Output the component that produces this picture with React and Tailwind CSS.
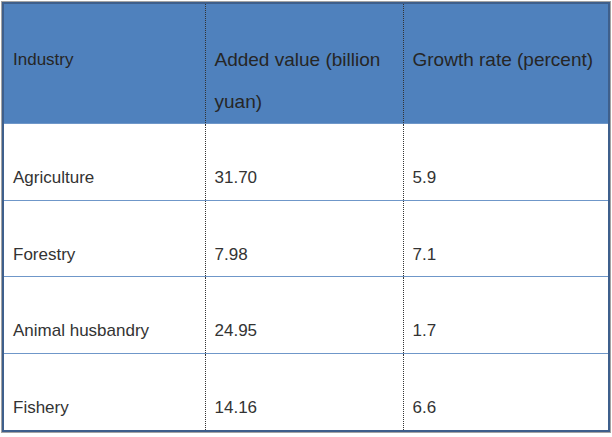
export default function App() {
  const rows = [
    ["Agriculture", "31.70", "5.9"],
    ["Forestry", "7.98", "7.1"],
    ["Animal husbandry", "24.95", "1.7"],
    ["Fishery", "14.16", "6.6"],
  ];
  const vline = "border-l border-l-[#333] [border-left-style:dotted]";
  return (
    <div className="w-[612px] h-[437px] bg-white" style={{ fontFamily: '"Liberation Sans", Arial, sans-serif' }}>
      <div className="ml-px mt-px w-[610px] border border-[#a3a3a3]">
        <table className="w-full border-collapse border-2 border-[#3e5f8c] table-fixed text-[17px] leading-[42px] text-[#333333]">
          <colgroup>
            <col className="w-[202px]" />
            <col className="w-[198px]" />
            <col />
          </colgroup>
          <thead>
            <tr className="h-[120px] bg-[#4f81bd] text-[#262626]">
              <th className="font-normal text-left align-top pl-[9px] pt-[35px] border-b border-b-[#6f97c9]">Industry</th>
              <th className={"font-normal text-[19px] text-left align-top pl-[9px] pr-2 pt-[35px] border-b border-b-[#6f97c9] " + vline}>Added value (billion yuan)</th>
              <th className={"font-normal text-[19px] text-left align-top pl-[9px] pt-[35px] border-b border-b-[#6f97c9] " + vline}>Growth rate (percent)</th>
            </tr>
          </thead>
          <tbody>
            {rows.map((r, i) => (
              <tr key={i} className={i === 1 ? "h-[76px]" : "h-[77px]"}>
                <td className={"align-top pl-[9px] pt-[33px] " + (i < 3 ? "border-b border-b-[#6f97c9]" : "")}>{r[0]}</td>
                <td className={"align-top pl-[9px] pt-[33px] " + vline + (i < 3 ? " border-b border-b-[#6f97c9]" : "")}>{r[1]}</td>
                <td className={"align-top pl-[9px] pt-[33px] " + vline + (i < 3 ? " border-b border-b-[#6f97c9]" : "")}>{r[2]}</td>
              </tr>
            ))}
          </tbody>
        </table>
      </div>
    </div>
  );
}
